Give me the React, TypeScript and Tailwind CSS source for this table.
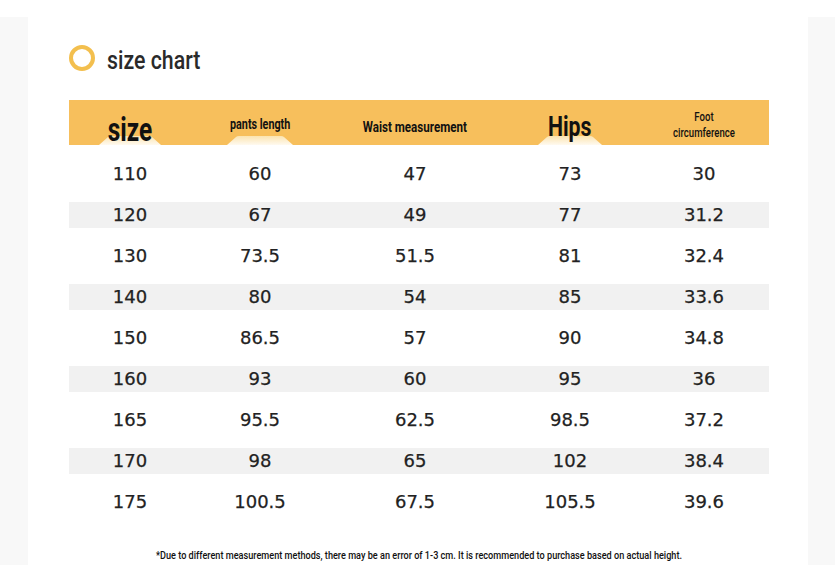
import React from "react";

const rows = [
  ["110", "60", "47", "73", "30"],
  ["120", "67", "49", "77", "31.2"],
  ["130", "73.5", "51.5", "81", "32.4"],
  ["140", "80", "54", "85", "33.6"],
  ["150", "86.5", "57", "90", "34.8"],
  ["160", "93", "60", "95", "36"],
  ["165", "95.5", "62.5", "98.5", "37.2"],
  ["170", "98", "65", "102", "38.4"],
  ["175", "100.5", "67.5", "105.5", "39.6"],
];

const colW = ["w-[122px]", "w-[138px]", "w-[172px]", "w-[138px]", "w-[130px]"];

const narrow = { fontFamily: '"Roboto", "Liberation Sans", sans-serif' };
const digits = { fontFamily: '"DejaVu Sans", "Noto Sans", sans-serif' };

function Bump({ w = 64 }: { w?: number }) {
  return (
    <svg
      className="absolute bottom-0 left-1/2 -translate-x-1/2"
      width={w}
      height={9}
      viewBox={`0 0 ${w} 9`}
    >
      <defs>
        <linearGradient id="bg1" x1="0" y1="0" x2="0" y2="1">
          <stop offset="0" stopColor="#fbe4b0" />
          <stop offset="1" stopColor="#fffaf0" />
        </linearGradient>
      </defs>
      <path d={`M0 9 L9 1 Q10 0 12 0 L${w - 12} 0 Q${w - 10} 0 ${w - 9} 1 L${w} 9 Z`} fill="url(#bg1)" />
    </svg>
  );
}

export default function App() {
  return (
    <div className="w-[835px] h-[585px] bg-white flex pt-[17px] overflow-hidden">
      <div className="w-[28px] h-[548px] bg-[#f8f8f8]" />
      <div className="w-[780px] h-[568px] flex flex-col pl-[41px]">
        <div className="mt-[29px] h-[24px] flex items-center">
          <div className="w-[26px] h-[26px] rounded-full border-[4px] border-[#f3bf4e]" />
          <span
            className="ml-[12px] text-[26px] leading-none text-[#2a2a2a] mt-[4px] font-medium scale-x-[0.82] origin-left"
            style={narrow}
          >
            size chart
          </span>
        </div>
        <div className="mt-[30px] w-[700px] h-[45px] bg-[#f7bf5c] flex text-[#111]" style={narrow}>
          <div className={`${colW[0]} relative flex items-end justify-center`}>
            <Bump w={62} />
            <span className="relative text-[33px] font-bold leading-none scale-x-[0.74] -mb-[1px]">size</span>
          </div>
          <div className={`${colW[1]} relative flex items-center justify-center`}>
            <Bump w={66} />
            <span className="relative text-[14px] leading-none mt-[2px] font-bold scale-x-[0.77]">pants length</span>
          </div>
          <div className={`${colW[2]} relative flex items-center justify-center`}>
            <span className="relative text-[14px] leading-none font-bold scale-x-[0.83] mt-[8px]">Waist measurement</span>
          </div>
          <div className={`${colW[3]} relative flex items-center justify-center`}>
            <Bump w={64} />
            <span className="relative text-[28px] font-bold leading-none scale-x-[0.76] mt-[8px]">Hips</span>
          </div>
          <div className={`${colW[4]} relative flex flex-col items-center justify-center text-[12px] leading-[16px] font-medium scale-x-[0.8] pt-[4px]`}>
            <span>Foot</span>
            <span>circumference</span>
          </div>
        </div>
        <div className="mt-[8px] w-[700px] flex flex-col">
          {rows.map((r, i) => (
            <div key={i} className="h-[41px] flex items-center">
              <div className={`w-full h-[26px] flex items-center ${i % 2 === 1 ? "bg-[#f1f1f1]" : ""}`}>
                {r.map((c, j) => (
                  <div
                    key={j}
                    className={`${colW[j]} text-center text-[18px] leading-none text-[#222] [-webkit-text-stroke:0.25px_#222]`}
                    style={digits}
                  >
                    {c}
                  </div>
                ))}
              </div>
            </div>
          ))}
        </div>
        <div
          className="mt-[28px] w-[700px] text-center text-[11px] leading-none text-[#111] font-medium scale-x-[0.83]"
          style={narrow}
        >
          *Due to different measurement methods, there may be an error of 1-3 cm. It is recommended to purchase based on actual height.
        </div>
      </div>
      <div className="w-[27px] h-[548px] bg-[#f8f8f8]" />
    </div>
  );
}
